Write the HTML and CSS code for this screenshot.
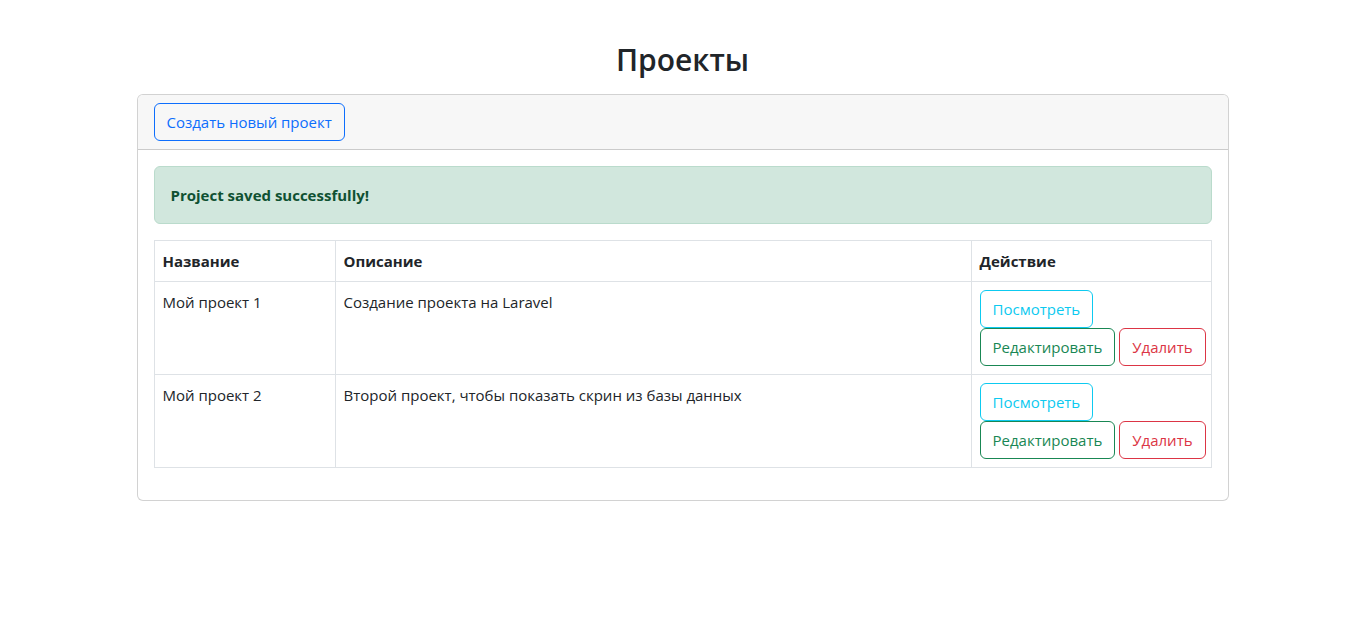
FILE: index.html
```html
<!DOCTYPE html>
<html lang="ru">
<head>
<meta charset="utf-8">
<title>Проекты</title>
<link rel="stylesheet" href="styles.css">
</head>
<body>
<div class="container">
  <h1 class="title">Проекты</h1>
  <div class="card">
    <div class="card-header">
      <a class="btn btn-primary" href="#">Создать новый проект</a>
    </div>
    <div class="card-body">
      <div class="alert">Project saved successfully!</div>
      <table class="table">
        <thead>
          <tr>
            <th class="col-name">Название</th>
            <th class="col-desc">Описание</th>
            <th class="col-act">Действие</th>
          </tr>
        </thead>
        <tbody>
          <tr>
            <td>Мой проект 1</td>
            <td>Создание проекта на Laravel</td>
            <td>
              <div class="actions"><a class="btn btn-info" href="#">Посмотреть</a></div>
              <div class="actions"><a class="btn btn-success" href="#">Редактировать</a><button class="btn btn-danger" type="button">Удалить</button></div>
            </td>
          </tr>
          <tr>
            <td>Мой проект 2</td>
            <td>Второй проект, чтобы показать скрин из базы данных</td>
            <td>
              <div class="actions"><a class="btn btn-info" href="#">Посмотреть</a></div>
              <div class="actions"><a class="btn btn-success" href="#">Редактировать</a><button class="btn btn-danger" type="button">Удалить</button></div>
            </td>
          </tr>
        </tbody>
      </table>
    </div>
  </div>
</div>
</body>
</html>
```
FILE: styles.css
```css
* { box-sizing: border-box; }
html, body { margin: 0; }
body {
  font-family: "Open Sans", "Noto Sans", "Liberation Sans", sans-serif;
  font-size: 15px;
  line-height: 24px;
  color: #212529;
  background: #fff;
}
.container {
  width: 1092px;
  margin: 0 auto;
}
.title {
  margin: 0 0 14px;
  padding-top: 39px;
  font-size: 30px;
  font-weight: 600;
  line-height: 41px;
  text-align: center;
}
.card {
  border: 1px solid rgba(0, 0, 0, 0.175);
  border-radius: 6px;
  background: #fff;
}
.card-header {
  padding: 8px 16px;
  background: #f7f7f7;
  border-bottom: 1px solid rgba(0, 0, 0, 0.175);
  border-radius: 5px 5px 0 0;
}
.card-body {
  padding: 16px;
}
.btn {
  display: inline-block;
  padding: 6px 12px;
  font-family: inherit;
  font-size: 15px;
  line-height: 24px;
  text-decoration: none;
  background: transparent;
  border: 1px solid;
  border-radius: 6px;
  cursor: pointer;
  vertical-align: middle;
}
.btn-primary { color: #0d6efd; border-color: #0d6efd; }
.btn-info { color: #0dcaf0; border-color: #0dcaf0; }
.btn-success { color: #198754; border-color: #198754; }
.btn-danger { color: #dc3545; border-color: #dc3545; }
.alert {
  padding: 16px;
  margin-bottom: 16px;
  color: #0f5132;
  background: #d1e7dd;
  border: 1px solid #badbcc;
  border-radius: 6px;
  font-weight: 700;
}
.table {
  width: 100%;
  margin-bottom: 16px;
  border-collapse: collapse;
  table-layout: fixed;
}
.table th, .table td {
  padding: 8px;
  border: 1px solid #dee2e6;
  text-align: left;
  vertical-align: top;
}
.table th { font-weight: 700; }
.col-name { width: 181px; }
.col-desc { width: 636px; }
.col-act { width: 240px; }
.actions {
  display: flex;
  gap: 4px;
  white-space: nowrap;
}
```
